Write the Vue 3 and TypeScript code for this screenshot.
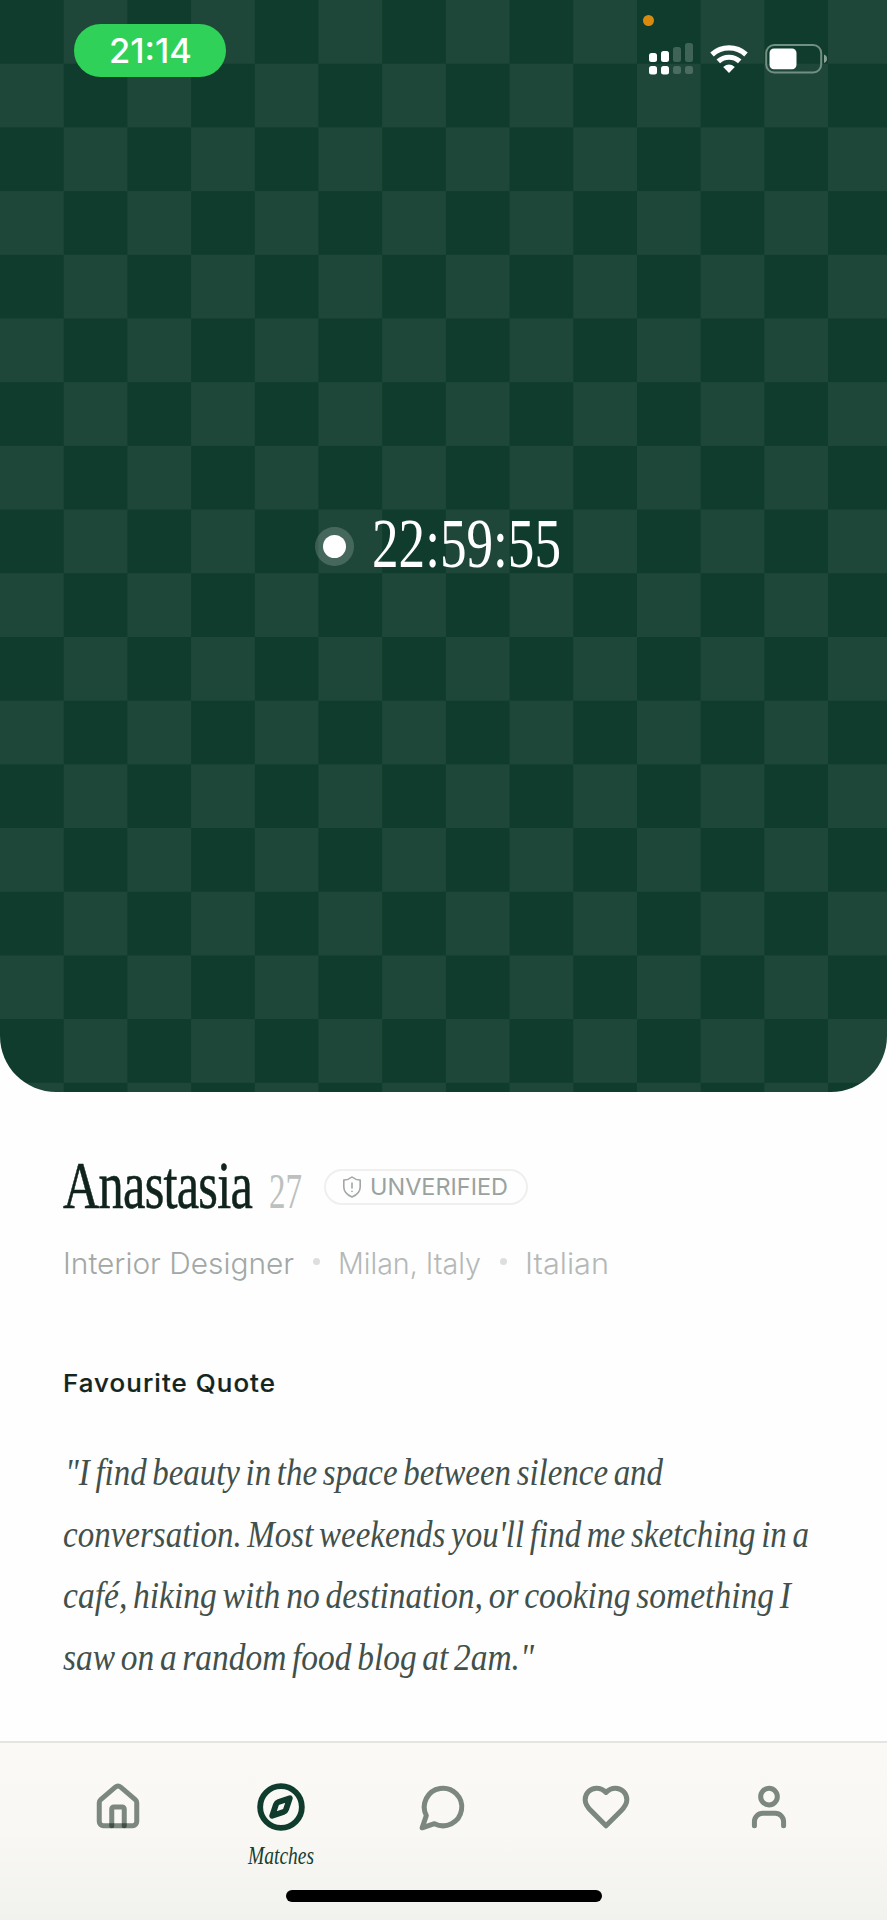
<script setup lang="ts">
interface QuoteLine {
  text: string
  inset: number
  width: number
}

interface NavItem {
  name: string
  label?: string
  paths: string[]
  circle?: { cx: number; cy: number; r: number }
}

const quoteLines: QuoteLine[] = [
  { text: '"I find beauty in the space between silence and', inset: 2, width: 598 },
  { text: "conversation. Most weekends you'll find me sketching in a", inset: 0, width: 746 },
  { text: 'café, hiking with no destination, or cooking something I', inset: 0, width: 728 },
  { text: 'saw on a random food blog at 2am."', inset: 0, width: 471 },
]

const navItems: NavItem[] = [
  {
    name: 'home',
    paths: [
      'M15 21v-8a1 1 0 0 0-1-1h-4a1 1 0 0 0-1 1v8',
      'M3 10a2 2 0 0 1 .709-1.528l7-5.999a2 2 0 0 1 2.582 0l7 5.999A2 2 0 0 1 21 10v9a2 2 0 0 1-2 2H5a2 2 0 0 1-2-2z',
    ],
  },
  {
    name: 'matches',
    label: 'Matches',
    paths: ['m16.24 7.76-1.804 5.411a2 2 0 0 1-1.265 1.265L7.76 16.24l1.804-5.411a2 2 0 0 1 1.265-1.265z'],
    circle: { cx: 12, cy: 12, r: 10 },
  },
  { name: 'chat', paths: ['M7.9 20A9 9 0 1 0 4 16.1L2 22Z'] },
  {
    name: 'likes',
    paths: [
      'M19 14c1.49-1.46 3-3.21 3-5.5A5.5 5.5 0 0 0 16.5 3c-1.76 0-3 .5-4.5 2-1.5-1.5-2.74-2-4.5-2A5.5 5.5 0 0 0 2 8.5c0 2.3 1.5 4.05 3 5.5l7 7Z',
    ],
  },
  {
    name: 'profile',
    paths: ['M19 21v-2a4 4 0 0 0-4-4H9a4 4 0 0 0-4 4v2'],
    circle: { cx: 12, cy: 7, r: 4 },
  },
]
</script>

<template>
  <div class="screen">
    <header class="hero">
      <div class="status">
        <div class="clock">
          <svg width="83" height="53"><text x="0" y="39" textLength="83" lengthAdjust="spacingAndGlyphs">21:14</text></svg>
        </div>
        <svg class="indicators" width="184" height="62" viewBox="0 0 184 62">
          <circle cx="5.5" cy="5.5" r="5.5" fill="#d98a0c" />
          <g fill="#fff">
            <rect x="6" y="38" width="8" height="9" rx="2.5" />
            <rect x="6" y="51" width="8" height="8.5" rx="2.5" />
            <rect x="18" y="36" width="8" height="11" rx="2.5" />
            <rect x="18" y="51" width="8" height="8.5" rx="2.5" />
            <g opacity=".2">
              <rect x="30" y="32" width="8" height="15" rx="2.5" />
              <rect x="30" y="51" width="8" height="8" rx="2.5" />
              <rect x="42" y="28" width="8" height="19" rx="2.5" />
              <rect x="42" y="51" width="8" height="8" rx="2.5" />
            </g>
          </g>
          <g fill="none" stroke="#fff" stroke-width="5.2">
            <path d="M69 39.5a25.3 25.3 0 0 1 34 0" />
            <path d="M75.3 46.4a15.8 15.8 0 0 1 21.4 0" />
          </g>
          <path d="M86 58 80.2 51.9q5.8-4.6 11.6 0Z" fill="#fff" />
          <rect x="123.2" y="30" width="55" height="27.5" rx="8" fill="none" stroke="#728f83" stroke-width="2" />
          <rect x="126.5" y="33.5" width="27" height="20.7" rx="4.5" fill="#fff" />
          <path d="M181 39.5q3 1 3 4.2t-3 4.2Z" fill="#8aa197" />
        </svg>
      </div>
      <div class="countdown">
        <span class="pulse"></span>
        <svg width="189" height="60">
          <text x="0" y="51" textLength="189" lengthAdjust="spacingAndGlyphs">22:59:55</text>
        </svg>
      </div>
    </header>

    <main class="profile">
      <div class="identity">
        <svg class="name" width="189" height="60">
          <text x="0" y="48" textLength="189" lengthAdjust="spacingAndGlyphs">Anastasia</text>
        </svg>
        <svg class="age" width="33" height="60">
          <text x="0" y="48" textLength="33" lengthAdjust="spacingAndGlyphs">27</text>
        </svg>
        <div class="badge">
          <svg width="22" height="24" viewBox="0 0 22 24" fill="none" stroke="#a0a7a4" stroke-width="1.6" stroke-linecap="round" stroke-linejoin="round">
            <path d="M11 2C8.5 4 6 5 2.8 5.1V12c0 5 3.4 8 8.2 10 4.8-2 8.2-5 8.2-10V5.1C16 5 13.5 4 11 2ZM11 8v5M11 16.3v.1" />
          </svg>
          <svg width="138" height="32">
            <text x="0" y="23.5" textLength="138" lengthAdjust="spacingAndGlyphs">UNVERIFIED</text>
          </svg>
        </div>
      </div>

      <div class="details">
        <svg class="job" width="231" height="40">
          <text x="0" y="30" textLength="231" lengthAdjust="spacingAndGlyphs">Interior Designer</text>
        </svg>
        <i></i>
        <svg width="143" height="40">
          <text x="0" y="30" textLength="143" lengthAdjust="spacingAndGlyphs">Milan, Italy</text>
        </svg>
        <i></i>
        <svg width="84" height="40">
          <text x="0" y="30" textLength="84" lengthAdjust="spacingAndGlyphs">Italian</text>
        </svg>
      </div>

      <h2>
        <svg width="213" height="36">
          <text x="0" y="26" textLength="213" lengthAdjust="spacingAndGlyphs">Favourite Quote</text>
        </svg>
      </h2>

      <blockquote>
        <svg v-for="line in quoteLines" :key="line.text" width="760" height="61.6">
          <text :x="line.inset" y="42" :textLength="line.width" lengthAdjust="spacingAndGlyphs">{{ line.text }}</text>
        </svg>
      </blockquote>
    </main>

    <nav class="tabs">
      <div v-for="item in navItems" :key="item.name" class="tab" :class="{ active: item.label }">
        <svg class="icon" width="50" height="50" viewBox="0 0 24 24">
          <circle v-if="item.circle" v-bind="item.circle" />
          <path v-for="d in item.paths" :key="d" :d="d" />
        </svg>
        <svg v-if="item.label" class="label" width="66" height="32">
          <text x="0" y="23" textLength="66" lengthAdjust="spacingAndGlyphs">{{ item.label }}</text>
        </svg>
      </div>
      <span class="home-bar"></span>
    </nav>
  </div>
</template>

<style>
body {
  margin: 0;
  background: #fefefe;
}
</style>

<style scoped>
.screen {
  width: 887px;
  height: 1920px;
  display: flex;
  flex-direction: column;
  overflow: hidden;
  background: #fefefe;
  font-family: Inter, 'Liberation Sans', sans-serif;
}

svg {
  display: block;
  flex: none;
  overflow: visible;
}

.hero {
  box-sizing: border-box;
  flex: none;
  height: 1091.7px;
  border-radius: 0 0 56px 56px;
  background: conic-gradient(#1e4739 25%, #0f3c2c 0 50%, #1e4739 0 75%, #0f3c2c 0) 0 0 / 127.4px 127.4px;
}

.status {
  display: flex;
  justify-content: space-between;
  align-items: flex-start;
  height: 504px;
  padding: 0 60px 0 74px;
}

.clock {
  display: flex;
  justify-content: center;
  width: 152px;
  height: 53px;
  margin-top: 24px;
  border-radius: 27px;
  background: #30d158;
}

.clock text {
  font-size: 34px;
  font-weight: 500;
  fill: #fff;
}

.indicators {
  margin-top: 15px;
}

.countdown {
  display: flex;
  align-items: center;
  gap: 26px;
  height: 84px;
  padding-left: 323px;
}

.countdown text {
  font: 70px 'Liberation Serif', serif;
  fill: #fff;
}

.pulse {
  width: 23px;
  height: 23px;
  border-radius: 50%;
  background: #fff;
  box-shadow: 0 0 0 8px rgba(255, 255, 255, 0.18);
}

.profile {
  flex: none;
  box-sizing: border-box;
  height: 649.3px;
  padding: 68.3px 63px 0;
}

.identity {
  display: flex;
  height: 60px;
}

.name text {
  font: 67.5px 'Liberation Serif', serif;
  letter-spacing: -1px;
  fill: #10241d;
  stroke: #10241d;
  stroke-width: 0.6px;
}

.age {
  margin-left: 17px;
}

.age text {
  font: 50px 'Liberation Serif', serif;
  fill: #bcc0be;
}

.badge {
  display: flex;
  align-items: center;
  gap: 7px;
  box-sizing: border-box;
  width: 204px;
  height: 36px;
  margin: 9px 0 0 22px;
  padding-left: 15px;
  border: 2px solid #efefed;
  border-radius: 18px;
}

.badge text {
  font-size: 23px;
  fill: #9aa29e;
}

.details {
  display: flex;
  align-items: center;
  height: 40px;
  margin-top: 24px;
}

.details text {
  font-size: 29.5px;
  font-weight: 300;
  fill: #b4b9b7;
}

.details .job text {
  fill: #a2a8a5;
}

.details i {
  width: 7px;
  height: 7px;
  margin: 0 18px 4px 19px;
  border-radius: 50%;
  background: #dcdfdd;
}

h2 {
  height: 36px;
  margin: 82px 0 0;
}

h2 text {
  font-size: 24.5px;
  font-weight: 500;
  letter-spacing: 1px;
  fill: #14251f;
  stroke: #14251f;
  stroke-width: 0.2px;
}

blockquote {
  margin: 41px 0 0;
}

blockquote text {
  font: italic 38px 'Liberation Serif', serif;
  word-spacing: -3px;
  fill: #42504b;
}

.tabs {
  position: relative;
  flex: none;
  display: flex;
  box-sizing: border-box;
  height: 179px;
  padding: 39.5px 36.5px 0;
  border-top: 2px solid #e3e6e0;
  background: linear-gradient(#faf9f5 0, #f9f8f4 50%, #f1f1ee 100%);
}

.tab {
  flex: 1;
  display: flex;
  flex-direction: column;
  align-items: center;
}

.icon {
  fill: none;
  stroke: rgba(10, 30, 22, 0.52);
  stroke-width: 2.4;
  stroke-linecap: round;
  stroke-linejoin: round;
}

.active .icon {
  stroke: #0f3c2c;
  stroke-width: 2.8;
}

.label {
  margin-top: 9px;
}

.label text {
  font: italic 25px 'Liberation Serif', serif;
  fill: #173f31;
}

.home-bar {
  position: absolute;
  left: 286px;
  bottom: 18px;
  width: 316px;
  height: 12px;
  border-radius: 6px;
  background: #000;
}
</style>
